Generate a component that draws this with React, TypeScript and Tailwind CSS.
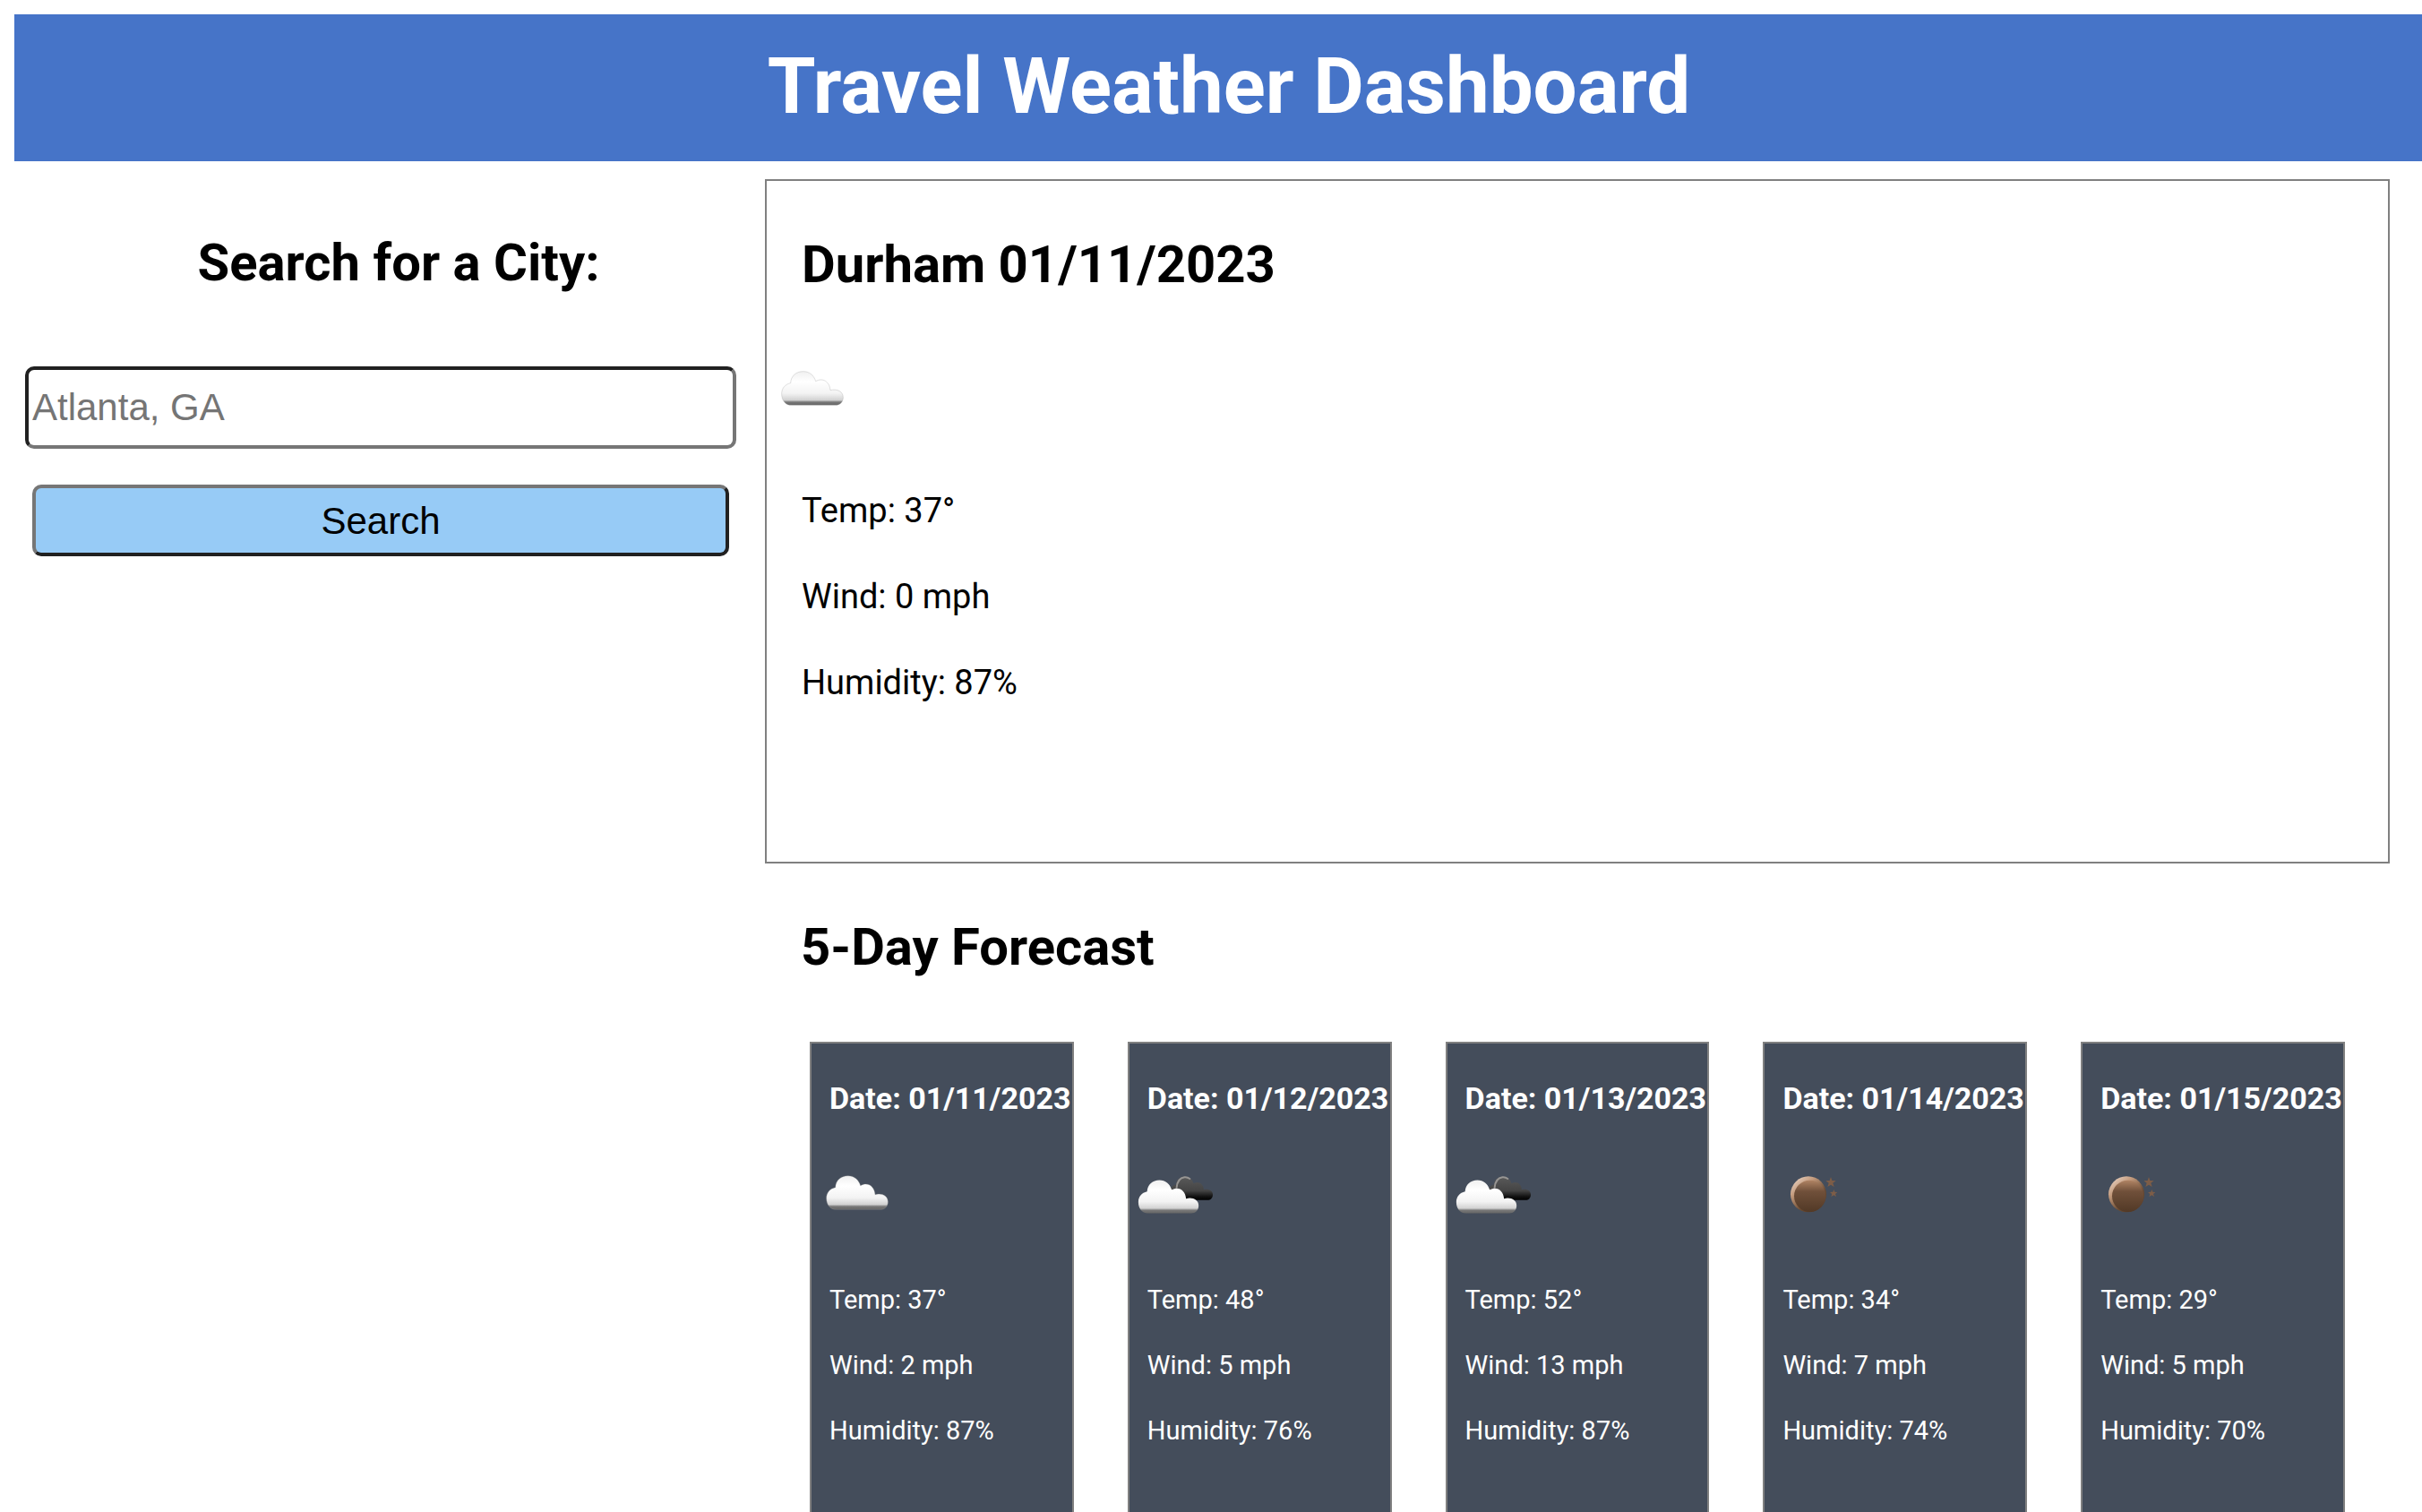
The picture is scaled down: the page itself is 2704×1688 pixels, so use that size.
import React from "react";

type Sky = "cloud" | "broken" | "night";

const CLOUD =
  "M100 178C78 178 67 160 67 140C67 122 78 108 97 104C98 80 116 65 139 65C160 65 175 78 181 98C205 84 228 100 230 128C252 122 273 132 273 152C273 168 262 178 248 178Z";

function WeatherIcon({ sky, id }: { sky: Sky; id: string }) {
  const light = `${id}-light`;
  const dark = `${id}-dark`;
  const moon = `${id}-moon`;
  const rim = `${id}-rim`;
  return (
    <svg viewBox="0 0 300 300" className="block size-[100px]" role="img" aria-label={sky}>
      <defs>
        <linearGradient id={light} x1="0" y1="0" x2="0" y2="1">
          <stop offset="0" stopColor="#f0f0f0" />
          <stop offset="0.3" stopColor="#ffffff" />
          <stop offset="0.65" stopColor="#f3f3f3" />
          <stop offset="0.85" stopColor="#d2d2d2" />
          <stop offset="0.91" stopColor="#777777" />
          <stop offset="1" stopColor="#666666" />
        </linearGradient>
        <linearGradient id={dark} x1="0" y1="0" x2="0" y2="1">
          <stop offset="0" stopColor="#5a5a5a" />
          <stop offset="0.6" stopColor="#444444" />
          <stop offset="0.85" stopColor="#111111" />
          <stop offset="1" stopColor="#000000" />
        </linearGradient>
        <linearGradient id={moon} x1="0" y1="0" x2="0" y2="1">
          <stop offset="0" stopColor="#b08464" />
          <stop offset="0.35" stopColor="#70503a" />
          <stop offset="1" stopColor="#523926" />
        </linearGradient>
        <linearGradient id={rim} x1="0" y1="0" x2="0.8" y2="1">
          <stop offset="0" stopColor="#f3e2d6" />
          <stop offset="0.35" stopColor="#c39a7c" />
          <stop offset="0.7" stopColor="#6a4a31" />
          <stop offset="1" stopColor="#553a25" />
        </linearGradient>
      </defs>
      {sky === "cloud" && (
        <path
          d={CLOUD}
          transform="translate(-17 30)"
          fill={`url(#${light})`}
          stroke="#999999"
          strokeOpacity="0.3"
          strokeWidth="3"
        />
      )}
      {sky === "broken" && (
        <>
          <path
            d={CLOUD}
            transform="translate(88 52) scale(0.7)"
            fill={`url(#${dark})`}
          />
          <path
            d="M158 134C160 114 171 102 184 100C191 99 197 101 202 105"
            fill="none"
            stroke="#a8a5a2"
            strokeOpacity="0.8"
            strokeWidth="6"
            strokeLinecap="round"
          />
          <path d={CLOUD} transform="translate(-36 46) scale(0.98)" fill={`url(#${light})`} />
        </>
      )}
      {sky === "night" && (
        <>
          <circle cx="147" cy="157" r="60" fill={`url(#${rim})`} />
          <circle cx="152" cy="163" r="53" fill={`url(#${moon})`} />
          <path
            d="M222 99L226 111L239 112L229 119L233 132L222 125L211 132L215 119L205 112L218 111Z"
            fill="#7d5d47"
          />
          <path
            d="M232 141L235 149L244 150L237 156L240 165L232 160L223 165L226 156L219 150L229 149Z"
            fill="#7d5d47"
          />
        </>
      )}
    </svg>
  );
}

const forecast: { date: string; sky: Sky; temp: number; wind: number; humidity: number }[] = [
  { date: "01/11/2023", sky: "cloud", temp: 37, wind: 2, humidity: 87 },
  { date: "01/12/2023", sky: "broken", temp: 48, wind: 5, humidity: 76 },
  { date: "01/13/2023", sky: "broken", temp: 52, wind: 13, humidity: 87 },
  { date: "01/14/2023", sky: "night", temp: 34, wind: 7, humidity: 74 },
  { date: "01/15/2023", sky: "night", temp: 29, wind: 5, humidity: 70 },
];

const HEADING = "text-[58px] leading-[68px] font-bold";

export default function App() {
  return (
    <div className="flex min-h-screen flex-col bg-white pt-4 font-[Roboto,sans-serif] text-black">
      <header className="ml-4 bg-[#4674c8] pt-7 pb-8 pl-6 text-center">
        <h1 className="text-[87px] leading-[104px] font-bold text-white">
          Travel Weather Dashboard
        </h1>
      </header>

      <div className="grid flex-1 grid-cols-[854fr_1850fr]">
        <aside className="pt-[79px]">
          <h2 id="search-title" className={`${HEADING} pl-9 text-center`}>
            Search for a City:
          </h2>
          <form
            className="mt-[82px] mr-8 ml-7 flex flex-col font-['Liberation_Sans',Arial,sans-serif] text-[42px]"
            onSubmit={(e) => e.preventDefault()}
          >
            <input
              type="text"
              aria-labelledby="search-title"
              placeholder="Atlanta, GA"
              className="h-[92px] rounded-[10px] border-4 border-t-[#212121] border-r-[#767676] border-b-[#767676] border-l-[#212121] bg-white px-1 placeholder:text-[#757575]"
            />
            <button
              type="submit"
              className="mx-2 mt-10 h-20 rounded-[10px] border-4 border-t-[#767676] border-r-[#212121] border-b-[#212121] border-l-[#767676] bg-[#97cbf6]"
            >
              Search
            </button>
          </form>
        </aside>

        <main className="flex flex-col pt-5 pr-9">
          <section className="min-h-[764px] border-2 border-[#808080] pt-[59px]">
            <h2 className={`${HEADING} pl-[39px]`}>Durham 01/11/2023</h2>
            <div className="mt-[54px]">
              <WeatherIcon sky="cloud" id="today" />
            </div>
            <div className="mt-[65px] flex flex-col gap-[52px] pl-[39px] text-[38px] leading-[44px]">
              <p>Temp: 37°</p>
              <p>Wind: 0 mph</p>
              <p>Humidity: 87%</p>
            </div>
          </section>

          <section className="mt-[59px] flex flex-1 flex-col">
            <h2 className={`${HEADING} pl-10`}>5-Day Forecast</h2>
            <div className="mt-[72px] grid flex-1 grid-cols-5 gap-[60px] px-[50px]">
              {forecast.map((day, i) => (
                <article
                  key={day.date}
                  className="border-2 border-b-0 border-[#808080] bg-[#444d5b] pt-10 pl-5 text-white"
                >
                  <h3 className="text-[34px] leading-[42px] font-bold whitespace-nowrap">
                    Date: {day.date}
                  </h3>
                  <div className="mt-[34px] -ml-5">
                    <WeatherIcon sky={day.sky} id={`day${i}`} />
                  </div>
                  <div className="mt-[52px] flex flex-col gap-[37px] text-[29px] leading-[36px]">
                    <p>Temp: {day.temp}°</p>
                    <p>Wind: {day.wind} mph</p>
                    <p>Humidity: {day.humidity}%</p>
                  </div>
                </article>
              ))}
            </div>
          </section>
        </main>
      </div>
    </div>
  );
}
